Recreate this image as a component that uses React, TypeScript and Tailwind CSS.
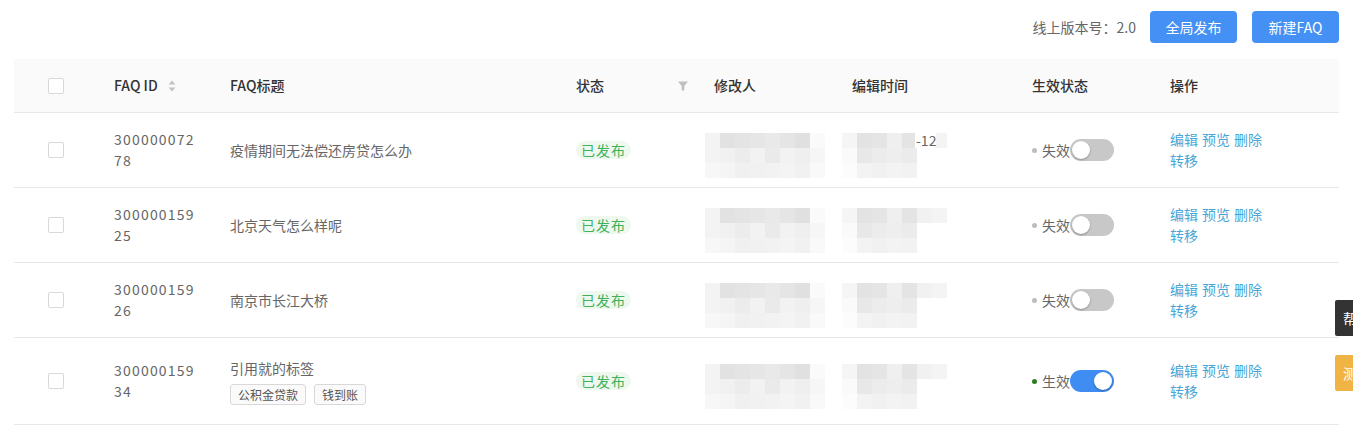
import React from 'react';

const cols = 'grid grid-cols-[84px_116px_346px_138px_138px_180px_138px_184px]';

type Row = {
  id: [string, string];
  title: string;
  tags?: string[];
  active: boolean;
  tall?: boolean;
};

const rows: Row[] = [
  { id: ['300000072', '78'], title: '疫情期间无法偿还房贷怎么办', active: false },
  { id: ['300000159', '25'], title: '北京天气怎么样呢', active: false },
  { id: ['300000159', '26'], title: '南京市长江大桥', active: false },
  { id: ['300000159', '34'], title: '引用就的标签', tags: ['公积金贷款', '钱到账'], active: true, tall: true },
];

// greys for the pixelated name / date cells
const nameShades = [
  ['#f3f3f3', '#e2e2e2', '#e4e4e4', '#e6e6e6', '#e9e9e9', '#e5e5e5', '#e0e0e0', '#fafafa'],
  ['#f3f3f3', '#f1f1f1', '#ececec', '#f2f2f2', '#eaeaea', '#f2f2f2', '#efefef', '#f6f6f6'],
  ['#f7f7f7', '#f5f5f5', '#f0f0f0', '#f1f1f1', '#f2f2f2', '#f4f4f4', '#f1f1f1', '#f9f9f9'],
];
const dateShades = [
  ['#f5f5f5', '#e3e3e3', '#e5e5e5', '#efefef', '#e4e4e4', '#f1f1f1', '#f4f4f4'],
  ['#fafafa', '#e8e8e8', '#ececec', '#eeeeee', '#ebebeb'],
  ['#fcfcfc', '#f3f3f3', '#f1f1f1', '#f3f3f3', '#f2f2f2'],
];

function Checkbox() {
  return <span className="block w-4 h-4 rounded-[2px] border border-[#d9d9d9] bg-white" />;
}

function Mosaic({ shades, tail }: { shades: string[][]; tail?: string }) {
  return (
    <div className="flex flex-col">
      {shades.map((r, i) => (
        <div key={i} className="flex items-center h-[15px]">
          {r.map((c, j) => (
            <span key={j} className="block w-[15px] h-[15px]" style={{ backgroundColor: c }} />
          ))}
          {i === 0 && tail ? <span className="ml-[-32px] text-[14px] text-[#666] leading-[15px] bg-white pl-[1px]">{tail}</span> : null}
        </div>
      ))}
    </div>
  );
}

function Switch({ on }: { on: boolean }) {
  return (
    <span className={`relative inline-block w-[44px] h-[22px] rounded-full ${on ? 'bg-[#3f8cf2]' : 'bg-[#c8c8c8]'}`}>
      <span
        className={`absolute top-[2px] w-[18px] h-[18px] rounded-full bg-white shadow-[0_1px_2px_rgba(0,0,0,0.3)] ${on ? 'left-[24px]' : 'left-[2px]'}`}
      />
    </span>
  );
}

export default function App() {
  return (
    <div className="relative w-[1353px] h-[432px] bg-white overflow-hidden font-['Noto_Sans_CJK_SC','Noto_Sans',sans-serif] text-[14px]">
      <div className="px-[14px] pt-[11px]">
        <div className="flex items-center justify-end h-[32px] mb-[16px]">
          <span className="text-[#666] mr-[14px]">线上版本号：2.0</span>
          <button className="h-[32px] w-[87px] rounded-[4px] bg-[#4590f5] text-white">全局发布</button>
          <button className="h-[32px] w-[87px] ml-[15px] rounded-[4px] bg-[#4590f5] text-white">新建FAQ</button>
        </div>

        <div className={`${cols} h-[54px] items-center bg-[#fafafa] border-b border-[#e8e8e8] text-[#333] font-medium`}>
          <div className="flex justify-center"><Checkbox /></div>
          <div className="px-4 flex items-center">
            FAQ ID
            <svg className="ml-[10px]" width="8" height="12" viewBox="0 0 8 12">
              <path d="M4 0.5L7.5 4.5H0.5Z" fill="#c4c4c4" />
              <path d="M4 11.5L7.5 7.5H0.5Z" fill="#c4c4c4" />
            </svg>
          </div>
          <div className="px-4">FAQ标题</div>
          <div className="pl-4 pr-[10px] flex items-center justify-between">
            状态
            <svg width="10" height="10" viewBox="0 0 10 10">
              <path d="M0 0.5H10L6.3 5V9.5H3.7V5Z" fill="#bfbfbf" />
            </svg>
          </div>
          <div className="px-4">修改人</div>
          <div className="px-4">编辑时间</div>
          <div className="px-4">生效状态</div>
          <div className="px-4">操作</div>
        </div>

        {rows.map((r, i) => (
          <div key={i} className={`${cols} ${r.tall ? 'h-[87px]' : 'h-[75px]'} items-center border-b border-[#e8e8e8] text-[#666]`}>
            <div className="flex justify-center"><Checkbox /></div>
            <div className="px-4 leading-[21px] tracking-[1.2px]">
              <div>{r.id[0]}</div>
              <div>{r.id[1]}</div>
            </div>
            <div className="px-4">
              <div className="leading-[22px]">{r.title}</div>
              {r.tags ? (
                <div className="flex gap-2 mt-[5px]">
                  {r.tags.map((t) => (
                    <span key={t} className="px-[7px] h-[21px] leading-[19px] text-[12px] rounded-[3px] border border-[#d9d9d9] bg-[#fafafa] text-[#555]">
                      {t}
                    </span>
                  ))}
                </div>
              ) : null}
            </div>
            <div className="px-4">
              <span className="inline-block px-[5px] h-[18px] leading-[18px] rounded-[9px] bg-[#eef8ef] text-[#3db25a] tracking-[1px]">已发布</span>
            </div>
            <div className="pl-[7px] pt-[10px]">
              <Mosaic shades={nameShades} />
            </div>
            <div className="pl-[6px] pt-[10px]">
              <Mosaic shades={dateShades} tail={i === 0 ? '-12' : undefined} />
            </div>
            <div className="px-4 flex items-center">
              <span className={`w-[5px] h-[5px] rounded-full mr-[5px] ${r.active ? 'bg-[#2e7d22]' : 'bg-[#bdbdbd]'}`} />
              <span>{r.active ? '生效' : '失效'}</span>
              <Switch on={r.active} />
            </div>
            <div className="px-4 text-[#49a6d6] leading-[21px]">
              <div className="flex gap-[4px]">
                <span>编辑</span>
                <span>预览</span>
                <span>删除</span>
              </div>
              <div>转移</div>
            </div>
          </div>
        ))}
      </div>

      <div className="absolute right-0 top-[300px] w-[18px] h-[36px] bg-[#333] overflow-hidden rounded-l-[2px]">
        <span className="absolute left-[8px] top-[8px] text-white text-[14px] leading-[20px] whitespace-nowrap">帮助</span>
      </div>
      <div className="absolute right-0 top-[355px] w-[18px] h-[36px] bg-[#f0b445] overflow-hidden rounded-l-[2px]">
        <span className="absolute left-[8px] top-[8px] text-white text-[14px] leading-[20px] whitespace-nowrap">测试</span>
      </div>
    </div>
  );
}
